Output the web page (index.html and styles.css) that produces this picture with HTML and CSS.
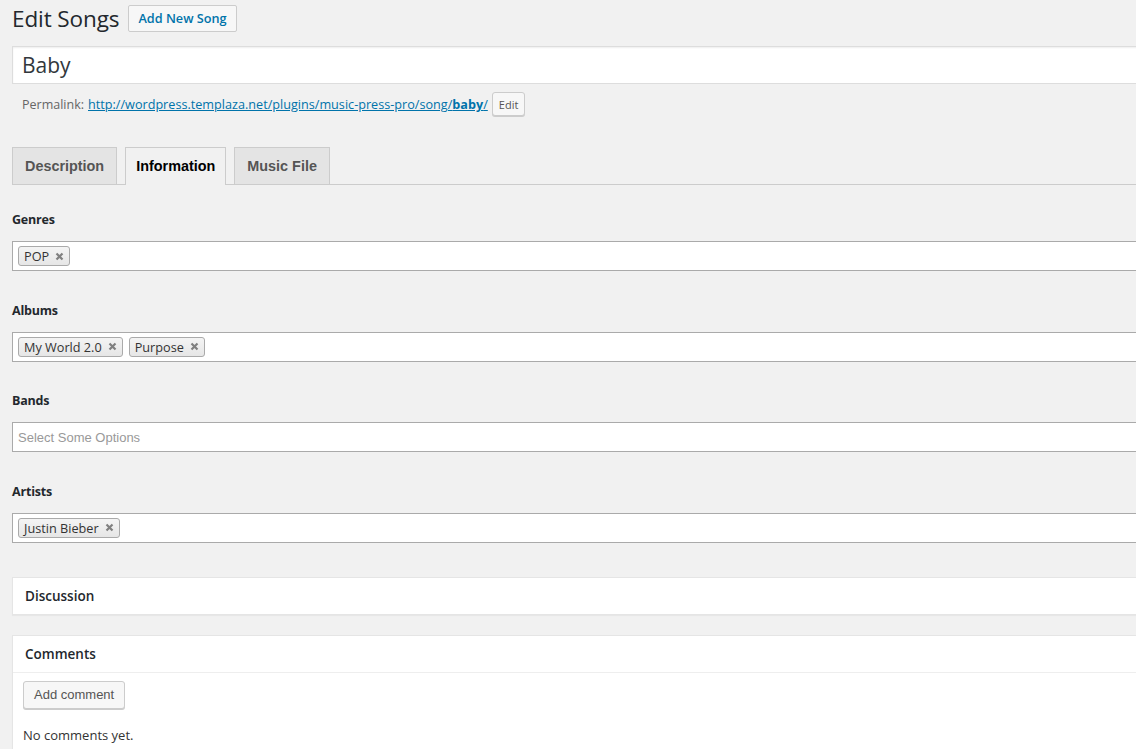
FILE: index.html
```html
<!DOCTYPE html>
<html>
<head>
<meta charset="utf-8">
<title>Edit Songs</title>
<link rel="stylesheet" href="styles.css">
</head>
<body>
<div class="wrap">
  <div class="page-head">
    <h1 class="page-title">Edit Songs</h1>
    <a class="title-action" href="#">Add New Song</a>
  </div>

  <div class="title-input">Baby</div>

  <div class="permalink">
    <span class="perma-label">Permalink:</span>
    <a class="perma-link" href="#">http://wordpress.templaza.net/plugins/music-press-pro/song/<b>baby</b>/</a>
    <button class="btn-small">Edit</button>
  </div>

  <ul class="tabs">
    <li class="tab">Description</li>
    <li class="tab active">Information</li>
    <li class="tab">Music File</li>
  </ul>

  <div class="field">
    <div class="field-label">Genres</div>
    <div class="select-box">
      <span class="chip">POP<svg class="x" viewBox="0 0 9 9"><path d="M1.5 1.5L7.5 7.5M7.5 1.5L1.5 7.5"/></svg></span>
    </div>
  </div>

  <div class="field">
    <div class="field-label">Albums</div>
    <div class="select-box">
      <span class="chip">My World 2.0<svg class="x" viewBox="0 0 9 9"><path d="M1.5 1.5L7.5 7.5M7.5 1.5L1.5 7.5"/></svg></span>
      <span class="chip">Purpose<svg class="x" viewBox="0 0 9 9"><path d="M1.5 1.5L7.5 7.5M7.5 1.5L1.5 7.5"/></svg></span>
    </div>
  </div>

  <div class="field">
    <div class="field-label">Bands</div>
    <div class="select-box">
      <span class="placeholder">Select Some Options</span>
    </div>
  </div>

  <div class="field">
    <div class="field-label">Artists</div>
    <div class="select-box">
      <span class="chip">Justin Bieber<svg class="x" viewBox="0 0 9 9"><path d="M1.5 1.5L7.5 7.5M7.5 1.5L1.5 7.5"/></svg></span>
    </div>
  </div>

  <div class="postbox discussion">
    <h2 class="postbox-title">Discussion</h2>
  </div>

  <div class="postbox comments">
    <h2 class="postbox-title bordered">Comments</h2>
    <div class="postbox-inside">
      <button class="btn">Add comment</button>
      <p class="no-comments">No comments yet.</p>
    </div>
  </div>
</div>
</body>
</html>
```

FILE: styles.css
```css
html, body {
  margin: 0;
  padding: 0;
  overflow: hidden;
}
body {
  background: #f1f1f1;
  font-family: "Open Sans", "Noto Sans", sans-serif;
  font-size: 13px;
  color: #444;
  width: 1136px;
  height: 749px;
}
.wrap {
  width: 1140px;
  padding-left: 12px;
}
.page-head {
  display: flex;
  align-items: center;
  gap: 10px;
  padding-top: 5px;
}
.page-title {
  margin: 0;
  font-size: 22.5px;
  font-weight: 400;
  color: #23282d;
  line-height: 27px;
  letter-spacing: -0.1px;
}
.title-action {
  display: block;
  height: 27px;
  box-sizing: border-box;
  line-height: 25px;
  padding: 0 9px;
  border: 1px solid #ccc;
  border-radius: 2px;
  background: #f7f7f7;
  color: #0073aa;
  font-size: 12.7px;
  font-weight: 600;
  text-decoration: none;
  margin-left: -1px;
}
.title-input {
  margin-top: 14px;
  height: 38px;
  box-sizing: border-box;
  border: 1px solid #ddd;
  background: #fff;
  box-shadow: inset 0 1px 2px rgba(0,0,0,.07);
  padding-left: 9px;
  font-size: 21px;
  line-height: 36px;
  color: #32373c;
}
.permalink {
  display: flex;
  align-items: center;
  margin-top: 8px;
  height: 24px;
  padding-left: 10px;
  font-size: 12.5px;
}
.perma-label {
  color: #666;
  margin-right: 4px;
}
.perma-link {
  color: #0073aa;
  text-decoration: underline;
  font-size: 12.65px;
}
.perma-link b {
  font-weight: 700;
}
.btn-small {
  margin-left: 4px;
  height: 24px;
  padding: 0 6px;
  border: 1px solid #ccc;
  border-radius: 3px;
  background: #f7f7f7;
  box-shadow: 0 1px 0 #ccc;
  font-family: "Open Sans", sans-serif;
  font-size: 11px;
  color: #555;
}
.tabs {
  list-style: none;
  margin: 31px 0 0 0;
  padding: 0;
  display: flex;
  gap: 8px;
  border-bottom: 1px solid #ccc;
}
.tab {
  height: 37px;
  box-sizing: border-box;
  line-height: 36px;
  padding: 0 12px;
  border: 1px solid #ccc;
  border-bottom: none;
  background: #e4e4e4;
  font-family: "Liberation Sans", Arial, sans-serif;
  font-weight: 700;
  font-size: 14.4px;
  color: #555;
}
.tab.active {
  background: #f1f1f1;
  color: #000;
  margin-bottom: -1px;
  height: 38px;
  padding: 0 10px;
}
.field {
  padding-top: 30.6px;
}
.tabs + .field {
  padding-top: 26px;
}
.field-label {
  font-weight: 700;
  font-size: 12.5px;
  line-height: 18px;
  color: #23282d;
  margin-bottom: 12px;
  letter-spacing: -0.2px;
}
.select-box {
  height: 30px;
  box-sizing: border-box;
  border: 1px solid #aaa;
  background: #fff;
  display: flex;
  align-items: center;
  gap: 6px;
  padding-left: 5px;
}
.chip {
  display: inline-flex;
  align-items: center;
  height: 20px;
  box-sizing: border-box;
  padding: 0 5px;
  border: 1px solid #aaa;
  border-radius: 3px;
  background: linear-gradient(#f4f4f4, #e6e6e6);
  font-size: 12.7px;
  color: #333;
}
.x {
  width: 9px;
  height: 9px;
  margin-left: 6px;
}
.x path {
  stroke: #808080;
  stroke-width: 2.2;
  fill: none;
}
.placeholder {
  font-family: "Liberation Sans", Arial, sans-serif;
  font-size: 13px;
  color: #999;
}
.postbox {
  border: 1px solid #e5e5e5;
  background: #fff;
  box-shadow: 0 1px 1px rgba(0,0,0,.04);
}
.discussion {
  margin-top: 34.2px;
}
.comments {
  margin-top: 20px;
}
.postbox-title {
  margin: 0;
  height: 36px;
  line-height: 36px;
  padding-left: 12px;
  font-size: 13.5px;
  font-weight: 600;
  color: #23282d;
}
.postbox-title.bordered {
  border-bottom: 1px solid #eee;
}
.postbox-inside {
  padding: 8px 10px 10px;
}
.btn {
  height: 28px;
  padding: 0 10px;
  border: 1px solid #ccc;
  border-radius: 3px;
  background: #f7f7f7;
  box-shadow: 0 1px 0 #ccc;
  font-family: "Liberation Sans", Arial, sans-serif;
  font-size: 13px;
  color: #555;
}
.no-comments {
  margin: 17px 0 0 0;
  line-height: 18px;
  color: #333;
}
```
